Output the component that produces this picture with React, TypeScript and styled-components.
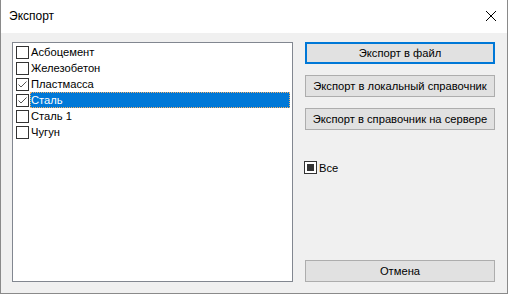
import React from 'react'
import styled, { createGlobalStyle } from 'styled-components'

const GlobalStyle = createGlobalStyle`
  html, body {
    margin: 0;
    padding: 0;
    background: #ffffff;
  }
  body {
    font-family: "Liberation Sans", Arial, sans-serif;
    font-size: 11.2px;
    color: #000;
  }
`

interface Item {
  name: string
  checked: boolean
  selected?: boolean
}

const items: Item[] = [
  { name: 'Асбоцемент', checked: false },
  { name: 'Железобетон', checked: false },
  { name: 'Пластмасса', checked: true },
  { name: 'Сталь', checked: true, selected: true },
  { name: 'Сталь 1', checked: false },
  { name: 'Чугун', checked: false },
]

const CheckMark: React.FC = () => (
  <svg width="11" height="11" viewBox="0 0 11 11">
    <path d="M1.5 5.5 L4 8 L9.5 2.5" fill="none" stroke="#555" strokeWidth="1" />
  </svg>
)

const App: React.FC = () => {
  return (
    <>
      <GlobalStyle />
      <Window>
        <TitleBar>
          <Title>Экспорт</Title>
          <CloseButton>
            <svg width="12" height="12" viewBox="0 0 12 12">
              <path d="M1 1 L11 11 M11 1 L1 11" stroke="#000" strokeWidth="1" />
            </svg>
          </CloseButton>
        </TitleBar>
        <Body>
          <ListBox>
            {items.map((item) => (
              <Row key={item.name}>
                <Box>{item.checked && <CheckMark />}</Box>
                <Label selected={!!item.selected}>{item.name}</Label>
              </Row>
            ))}
          </ListBox>
          <Side>
            <Button primary>Экспорт в файл</Button>
            <Button>Экспорт в локальный справочник</Button>
            <Button>Экспорт в справочник на сервере</Button>
            <AllRow>
              <AllBox>
                <AllFill />
              </AllBox>
              <span>Все</span>
            </AllRow>
            <Spacer />
            <Button>Отмена</Button>
          </Side>
        </Body>
      </Window>
    </>
  )
}

const Window = styled.div`
  width: 508px;
  height: 294px;
  box-sizing: border-box;
  border: 1px solid #8a8a8a;
  border-top: none;
  display: flex;
  flex-direction: column;
  background: #f0f0f0;
`

const TitleBar = styled.div`
  height: 33px;
  flex-shrink: 0;
  background: #ffffff;
  display: flex;
  align-items: center;
  justify-content: space-between;
  padding: 0 8px 1px 8px;
  box-sizing: border-box;
`

const Title = styled.span`
  font-size: 12px;
  color: #000;
`

const CloseButton = styled.div`
  width: 16px;
  height: 16px;
  display: flex;
  align-items: center;
  justify-content: center;
`

const Body = styled.div`
  flex: 1;
  display: flex;
  padding: 9px 12px 11px 11px;
  min-height: 0;
`

const ListBox = styled.div`
  width: 281px;
  box-sizing: border-box;
  border: 1px solid #828790;
  background: #ffffff;
  padding: 1px 1px 0 3px;
  display: flex;
  flex-direction: column;
`

const Row = styled.div`
  height: 16px;
  display: flex;
  align-items: center;
`

const Box = styled.div`
  width: 13px;
  height: 13px;
  box-sizing: border-box;
  border: 1px solid #333333;
  background: #ffffff;
  flex-shrink: 0;
  display: flex;
  align-items: center;
  justify-content: center;
`

const Label = styled.div<{ selected: boolean }>`
  flex: 1;
  height: 16px;
  line-height: 17px;
  padding-left: 1px;
  margin-left: 1px;
  margin-right: 1px;
  box-sizing: border-box;
  background: ${(p) => (p.selected ? '#0078d7' : 'transparent')};
  color: ${(p) => (p.selected ? '#ffffff' : '#000000')};
  outline: ${(p) => (p.selected ? '1px dotted #f5b26b' : 'none')};
  outline-offset: -1px;
`

const Side = styled.div`
  width: 190px;
  margin-left: 12px;
  display: flex;
  flex-direction: column;
`

const Button = styled.div<{ primary?: boolean }>`
  height: 22px;
  box-sizing: border-box;
  margin-bottom: 11px;
  background: #e1e1e1;
  border: ${(p) => (p.primary ? '2px solid #0078d7' : '1px solid #adadad')};
  display: flex;
  align-items: center;
  justify-content: center;
  white-space: nowrap;
  color: #000;
  &:last-child {
    margin-bottom: 0;
  }
`

const AllRow = styled.div`
  display: flex;
  align-items: center;
  gap: 2px;
  margin-top: 20px;
  margin-left: -1px;
`

const AllBox = styled.div`
  width: 13px;
  height: 13px;
  box-sizing: border-box;
  border: 1px solid #333333;
  background: #fff;
  display: flex;
  align-items: center;
  justify-content: center;
`

const AllFill = styled.div`
  width: 7px;
  height: 7px;
  background: #333333;
`

const Spacer = styled.div`
  flex: 1;
`

export default App
